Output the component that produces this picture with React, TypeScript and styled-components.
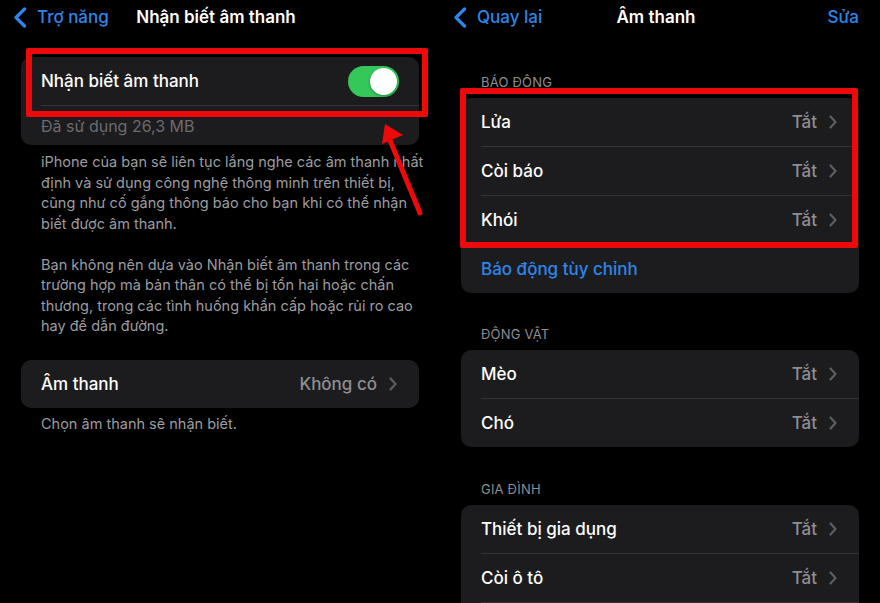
import React from "react";
import styled, { createGlobalStyle } from "styled-components";

const Global = createGlobalStyle`
  html, body { margin: 0; padding: 0; background: #000; }
  body { font-family: Inter, "Noto Sans", "DejaVu Sans", sans-serif; -webkit-font-smoothing: antialiased; }
  * { box-sizing: border-box; }
`;

const BLUE = "#2e86ea";
const GREY = "#8e8e93";

const Screen = styled.div`
  display: flex;
  width: 880px;
  height: 603px;
  background: #000;
  overflow: hidden;
`;

const Panel = styled.div`
  position: relative;
  width: 440px;
  flex: none;
  display: flex;
  flex-direction: column;
`;

const NavBar = styled.div`
  flex: none;
  height: 34px;
  display: grid;
  grid-template-columns: 1fr auto 1fr;
  align-items: center;
  padding: 0 21px 0 13px;
`;

const BackLink = styled.div`
  display: flex;
  align-items: center;
  gap: 10px;
  color: ${BLUE};
  font-size: 17px;
  font-weight: 500;
  justify-self: start;
`;

const NavTitle = styled.div`
  color: #fff;
  font-size: 17px;
  font-weight: 600;
  text-align: center;
`;

const NavAction = styled.div`
  justify-self: end;
  color: ${BLUE};
  font-size: 17px;
  font-weight: 500;
`;

const Content = styled.div`
  flex: none;
  display: flex;
  flex-direction: column;
  padding: 0 21px;
`;

const Card = styled.div<{ $mt?: number }>`
  flex: none;
  background: #1c1c1e;
  border-radius: 10px;
  overflow: hidden;
  margin-top: ${(p) => p.$mt ?? 0}px;
`;

const Row = styled.div<{ $h?: number }>`
  height: ${(p) => p.$h ?? 48}px;
  display: flex;
  align-items: center;
  justify-content: space-between;
  padding: 0 22px 0 20px;
`;

const Label = styled.span<{ $tone?: "white" | "blue" | "dim" }>`
  font-size: ${(p) => (p.$tone === "dim" ? 16 : 17)}px;
  font-weight: ${(p) => (p.$tone === "dim" ? 400 : 500)};
  color: ${(p) =>
    p.$tone === "blue" ? BLUE : p.$tone === "dim" ? "#6b6b70" : "#fff"};
`;

const Trailing = styled.span`
  display: flex;
  align-items: center;
  gap: 12px;
  font-size: 17px;
  font-weight: 500;
  color: ${GREY};
`;

const Divider = styled.div`
  height: 1px;
  margin-left: 20px;
  background: #333336;
`;

const Toggle = styled.div<{ $on: boolean }>`
  width: 51px;
  height: 31px;
  border-radius: 16px;
  background: ${(p) => (p.$on ? "#34c759" : "#39393d")};
  display: flex;
  align-items: center;
  justify-content: ${(p) => (p.$on ? "flex-end" : "flex-start")};
  padding: 2px;
  margin-right: -2px;
`;

const Knob = styled.div`
  width: 27px;
  height: 27px;
  border-radius: 50%;
  background: #fff;
  box-shadow: 0 1px 3px rgba(0, 0, 0, 0.3);
`;

const Description = styled.div<{ $mt: number }>`
  margin-top: ${(p) => p.$mt}px;
  padding: 0 20px;
  font-size: 14.5px;
  line-height: 20.5px;
  color: #9c9ca1;
  white-space: nowrap;
`;

const Paragraph = styled.p`
  margin: 0;
  & + & { margin-top: 20.5px; }
`;

const SectionHeader = styled.div<{ $mt: number }>`
  flex: none;
  margin-top: ${(p) => p.$mt}px;
  padding-left: 20px;
  height: 16px;
  line-height: 16px;
  font-size: 13px;
  letter-spacing: 0.2px;
  color: ${GREY};
  margin-bottom: 8px;
`;

const Highlight = styled.div<{ $l: number; $t: number; $w: number; $h: number }>`
  position: absolute;
  left: ${(p) => p.$l}px;
  top: ${(p) => p.$t}px;
  width: ${(p) => p.$w}px;
  height: ${(p) => p.$h}px;
  border: 6px solid #ee0a0a;
  border-radius: 2px;
  pointer-events: none;
`;

const ArrowSvg = styled.svg`
  position: absolute;
  left: 370px;
  top: 115px;
  pointer-events: none;
`;

const BackChevron = () => (
  <svg width="14" height="21" viewBox="0 0 14 21">
    <path d="M11.5 2 L3 10.5 L11.5 19" fill="none" stroke={BLUE} strokeWidth="3.2" strokeLinecap="round" strokeLinejoin="round" />
  </svg>
);

const RowChevron = () => (
  <svg width="8" height="14" viewBox="0 0 8 14">
    <path d="M1.5 1.5 L6.5 7 L1.5 12.5" fill="none" stroke="#5c5c61" strokeWidth="2.2" strokeLinecap="round" strokeLinejoin="round" />
  </svg>
);

type Item = { label: string; value: string };

const ListRows = ({ items }: { items: Item[] }) => (
  <>
    {items.map((it, i) => (
      <React.Fragment key={it.label}>
        {i > 0 && <Divider />}
        <Row>
          <Label>{it.label}</Label>
          <Trailing>
            {it.value}
            <RowChevron />
          </Trailing>
        </Row>
      </React.Fragment>
    ))}
  </>
);

export default function App() {
  return (
    <>
      <Global />
      <Screen>
        <Panel>
          <NavBar>
            <BackLink>
              <BackChevron />
              Trợ năng
            </BackLink>
            <NavTitle>Nhận biết âm thanh</NavTitle>
            <span />
          </NavBar>
          <Content>
            <Card $mt={23}>
              <Row>
                <Label>Nhận biết âm thanh</Label>
                <Toggle $on>
                  <Knob />
                </Toggle>
              </Row>
              <Divider />
              <Row $h={39}>
                <Label $tone="dim">Đã sử dụng 26,3 MB</Label>
              </Row>
            </Card>
            <Description $mt={7}>
              <Paragraph>
                iPhone của bạn sẽ liên tục lắng nghe các âm thanh nhất
                <br />
                định và sử dụng công nghệ thông minh trên thiết bị,
                <br />
                cũng như cố gắng thông báo cho bạn khi có thể nhận
                <br />
                biết được âm thanh.
              </Paragraph>
              <Paragraph>
                Bạn không nên dựa vào Nhận biết âm thanh trong các
                <br />
                trường hợp mà bản thân có thể bị tổn hại hoặc chấn
                <br />
                thương, trong các tình huống khẩn cấp hoặc rủi ro cao
                <br />
                hay để dẫn đường.
              </Paragraph>
            </Description>
            <Card $mt={23}>
              <Row>
                <Label>Âm thanh</Label>
                <Trailing>
                  Không có
                  <RowChevron />
                </Trailing>
              </Row>
            </Card>
            <Description $mt={6}>
              <Paragraph>Chọn âm thanh sẽ nhận biết.</Paragraph>
            </Description>
          </Content>
          <Highlight $l={26} $t={48} $w={402} $h={69} />
          <ArrowSvg width="60" height="105" viewBox="0 0 60 105">
            <line x1="50" y1="98" x2="17" y2="18" stroke="#ee0a0a" strokeWidth="5" strokeLinecap="round" />
            <polygon points="15,9 12,29 33,20" fill="#ee0a0a" />
          </ArrowSvg>
        </Panel>

        <Panel>
          <NavBar>
            <BackLink>
              <BackChevron />
              Quay lại
            </BackLink>
            <NavTitle>Âm thanh</NavTitle>
            <NavAction>Sửa</NavAction>
          </NavBar>
          <Content>
            <SectionHeader $mt={40}>BÁO ĐỘNG</SectionHeader>
            <Card>
              <ListRows
                items={[
                  { label: "Lửa", value: "Tắt" },
                  { label: "Còi báo", value: "Tắt" },
                  { label: "Khói", value: "Tắt" },
                ]}
              />
              <Divider />
              <Row>
                <Label $tone="blue">Báo động tùy chỉnh</Label>
              </Row>
            </Card>
            <SectionHeader $mt={33}>ĐỘNG VẬT</SectionHeader>
            <Card>
              <ListRows
                items={[
                  { label: "Mèo", value: "Tắt" },
                  { label: "Chó", value: "Tắt" },
                ]}
              />
            </Card>
            <SectionHeader $mt={34}>GIA ĐÌNH</SectionHeader>
            <Card>
              <ListRows
                items={[
                  { label: "Thiết bị gia dụng", value: "Tắt" },
                  { label: "Còi ô tô", value: "Tắt" },
                ]}
              />
              <Divider />
              <Row />
            </Card>
          </Content>
          <Highlight $l={20} $t={88} $w={398} $h={160} />
        </Panel>
      </Screen>
    </>
  );
}
